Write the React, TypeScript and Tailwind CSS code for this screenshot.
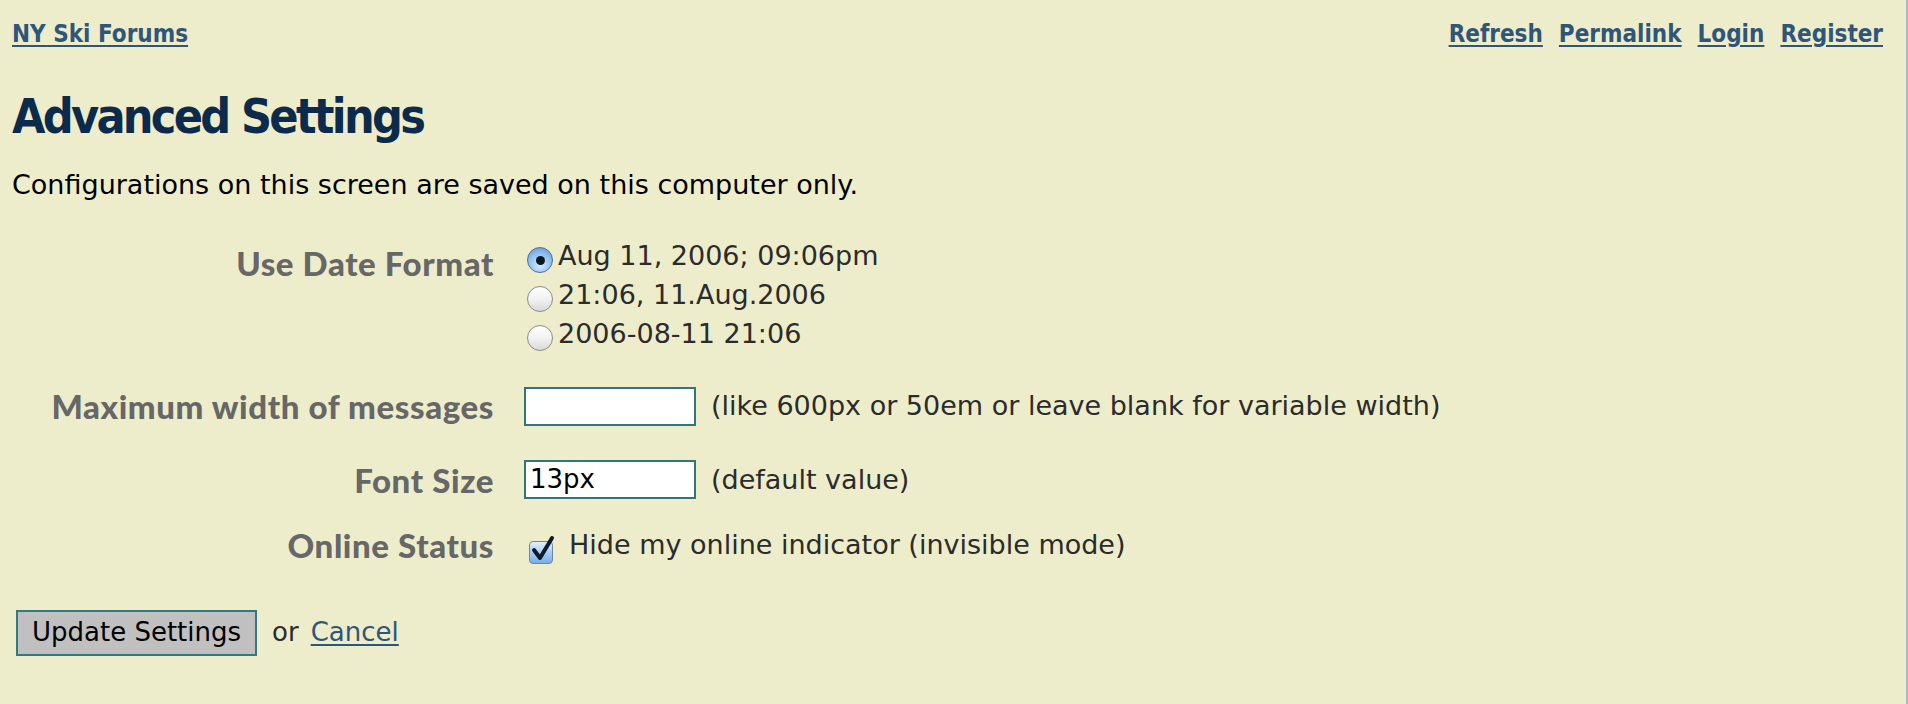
import React, { useState } from 'react';

// Font stacks standing in for Verdana / Tahoma / Gill Sans
const verdana = "font-['DejaVu_Sans',sans-serif]";
const tahoma = "font-['DejaVu_Sans_Condensed','DejaVu_Sans',sans-serif] font-stretch-condensed";
const gill = "font-['Lato',sans-serif]";

const dateFormats = ['Aug 11, 2006; 09:06pm', '21:06, 11.Aug.2006', '2006-08-11 21:06'];

function Radio({ checked, onClick }: { checked: boolean; onClick: () => void }) {
  return (
    <span
      onClick={onClick}
      className={`relative inline-block w-[26px] h-[26px] rounded-full border shrink-0 cursor-pointer ${
        checked
          ? 'border-[#4b6f9c] bg-[radial-gradient(circle_at_50%_70%,#d8ecff_0%,#8fc0f0_55%,#5a8fd0_100%)]'
          : 'border-[#8c8c8c] bg-[linear-gradient(to_bottom,#ffffff_0%,#f2f2f2_50%,#d9d9d9_100%)]'
      }`}
    >
      {checked && <span className="absolute left-[8px] top-[8px] w-[9px] h-[9px] rounded-full bg-[#0b1626]" />}
    </span>
  );
}

function Checkbox({ checked, onClick }: { checked: boolean; onClick: () => void }) {
  return (
    <span onClick={onClick} className="relative inline-block w-[24px] h-[23px] shrink-0 cursor-pointer">
      <span className="absolute inset-0 rounded-[4px] border border-[#6f86a3] bg-[linear-gradient(to_bottom,#e3f0fc_0%,#a9cdf3_50%,#79aee8_100%)]" />
      {checked && (
        <svg className="absolute left-[1px] top-[-6px]" width="26" height="28" viewBox="0 0 26 28">
          <path d="M4 15 L10 23 L22 3" fill="none" stroke="#0d1a2e" strokeWidth="4" strokeLinecap="round" strokeLinejoin="round" />
        </svg>
      )}
    </span>
  );
}

export default function App() {
  const [format, setFormat] = useState(0);
  const [hidden, setHidden] = useState(true);
  const [width, setWidth] = useState('');
  const [fontSize, setFontSize] = useState('13px');

  return (
    <div className="min-h-[704px] bg-[#ededcb] border-r-2 border-[#a6bccc] pl-[12px] pr-[23px] text-black">
      {/* Top bar */}
      <div className={`flex justify-between pt-[19px] text-[24px] leading-[30px] font-bold ${tahoma}`}>
        <a href="#" className="text-[#2f5679] underline underline-offset-[3px]">NY Ski Forums</a>
        <div className="flex gap-[16px]">
          {['Refresh', 'Permalink', 'Login', 'Register'].map((l) => (
            <a key={l} href="#" className="text-[#2f5679] underline underline-offset-[3px]">{l}</a>
          ))}
        </div>
      </div>

      <h1 className={`mt-[39px] text-[48px] leading-[56px] font-bold tracking-[-2.7px] text-[#0c2b4c] ${tahoma}`}>
        Advanced Settings
      </h1>

      <p className={`mt-[25px] text-[27px] leading-[32px] ${verdana}`}>
        Configurations on this screen are saved on this computer only.
      </p>

      <div className="mt-[35px]">
        {/* Date format */}
        <div className="flex">
          <div className={`w-[482px] shrink-0 text-right pt-[7px] text-[33px] leading-[40px] tracking-[0.6px] font-black text-[#676767] ${gill}`}>
            Use Date Format
          </div>
          <div className={`ml-[30px] text-[27px] leading-[39px] text-[#2b2b2b] ${verdana}`}>
            {dateFormats.map((f, i) => (
              <div key={f} className="flex items-center">
                <span className="ml-[3px] mr-[5px] mt-[8px] flex">
                  <Radio checked={format === i} onClick={() => setFormat(i)} />
                </span>
                <span>{f}</span>
              </div>
            ))}
          </div>
        </div>

        {/* Max width */}
        <div className="flex items-center mt-[33px]">
          <div className={`w-[482px] shrink-0 text-right text-[33px] leading-[40px] tracking-[0.6px] font-black text-[#676767] ${gill}`}>
            Maximum width of messages
          </div>
          <input
            value={width}
            onChange={(e) => setWidth(e.target.value)}
            className={`ml-[30px] w-[172px] h-[39px] border-2 border-[#2f7682] bg-white px-[4px] text-[26px] outline-none ${verdana}`}
          />
          <span className={`ml-[15px] text-[27px] text-[#2b2b2b] ${verdana}`}>
            (like 600px or 50em or leave blank for variable width)
          </span>
        </div>

        {/* Font size */}
        <div className="flex items-center mt-[33px]">
          <div className={`w-[482px] shrink-0 text-right text-[33px] leading-[40px] tracking-[0.6px] font-black text-[#676767] ${gill}`}>
            Font Size
          </div>
          <input
            value={fontSize}
            onChange={(e) => setFontSize(e.target.value)}
            className={`ml-[30px] w-[172px] h-[39px] border-2 border-[#2f7682] bg-white px-[4px] text-[26px] outline-none ${verdana}`}
          />
          <span className={`ml-[15px] text-[27px] text-[#2b2b2b] ${verdana}`}>(default value)</span>
        </div>

        {/* Online status */}
        <div className="flex items-center mt-[25px]">
          <div className={`w-[482px] shrink-0 text-right text-[33px] leading-[40px] tracking-[0.6px] font-black text-[#676767] ${gill}`}>
            Online Status
          </div>
          <span className="ml-[35px] mr-[16px] mt-[14px] flex">
            <Checkbox checked={hidden} onClick={() => setHidden(!hidden)} />
          </span>
          <span className={`text-[27px] text-[#2b2b2b] ${verdana}`}>Hide my online indicator (invisible mode)</span>
        </div>
      </div>

      {/* Actions */}
      <div className={`flex items-center mt-[44px] text-[26px] ${verdana}`}>
        <button className="ml-[4px] h-[46px] px-[14px] bg-[#c0c0c0] border-2 border-[#317a80] text-black">
          Update Settings
        </button>
        <span className="ml-[15px] text-[#2b2b2b]">or</span>
        <a href="#" className="ml-[12px] text-[#2f5679] underline underline-offset-[3px]">Cancel</a>
      </div>
    </div>
  );
}
